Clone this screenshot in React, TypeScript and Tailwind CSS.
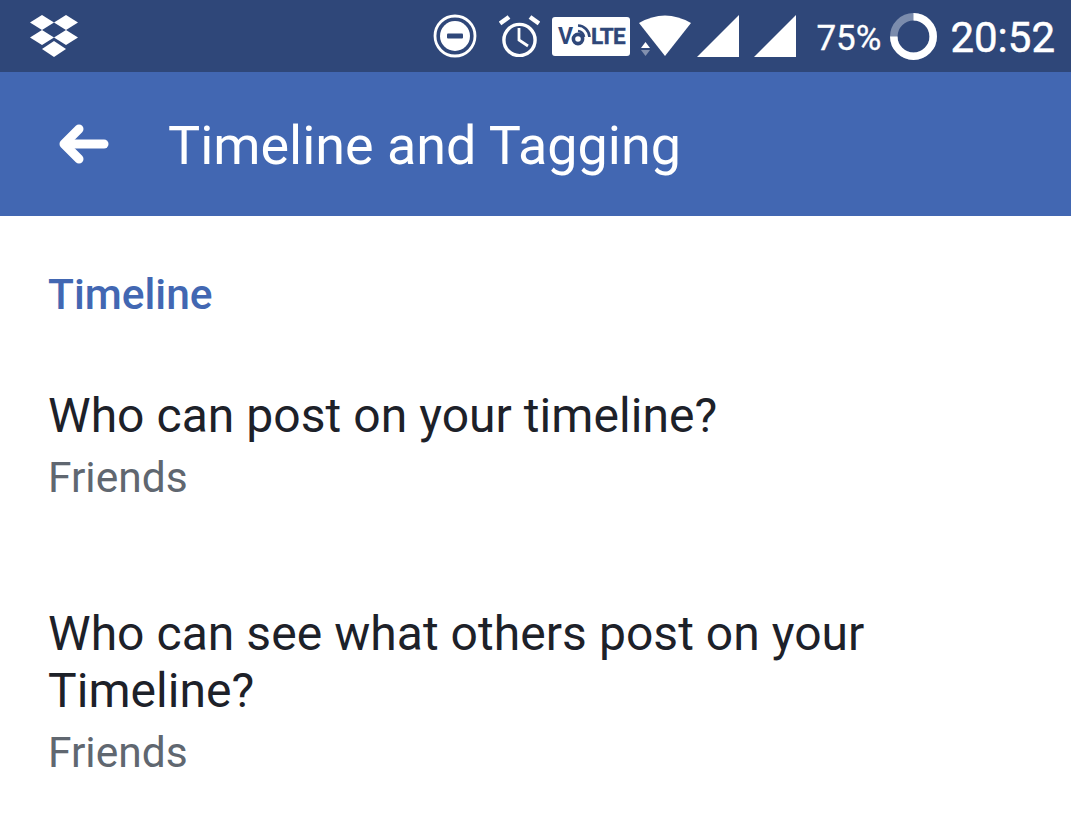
const Dropbox = () => (
  <svg width="48" height="42" viewBox="0 0 48 42" fill="white">
    <path d="M12 0 L24 7.5 L12 15 L0 7.5 Z" />
    <path d="M36 0 L48 7.5 L36 15 L24 7.5 Z" />
    <path d="M12 15 L24 22.5 L12 30 L0 22.5 Z" />
    <path d="M36 15 L48 22.5 L36 30 L24 22.5 Z" />
    <path d="M24 26 L36 34 L24 42 L12 34 Z" />
  </svg>
);

const Dnd = () => (
  <svg width="44" height="44" viewBox="0 0 44 44" fill="none">
    <circle cx="22" cy="22" r="20" stroke="white" strokeWidth="2.8" />
    <circle cx="22" cy="22" r="15" fill="white" />
    <rect x="14" y="19.5" width="16" height="5" rx="1" fill="#2f4779" />
  </svg>
);

const Alarm = () => (
  <svg width="41" height="42" viewBox="0 0 41 42" fill="none" stroke="white" strokeWidth="3.4">
    <circle cx="20.5" cy="25" r="15.6" />
    <path d="M20 13 V25 L29 31" strokeWidth="2.8" />
    <path d="M1 8.5 L10 2" strokeWidth="4.6" />
    <path d="M40 8.5 L31 2" strokeWidth="4.6" />
  </svg>
);

const VolteBadge = () => (
  <div className="w-[78px] h-[39px] bg-white rounded-[3px] flex items-center justify-center text-[#2f4779] font-bold leading-none">
    <span className="text-[23px]">V</span>
    <svg width="20" height="26" viewBox="0 0 20 26" fill="none" stroke="#2f4779" className="-ml-[2px] -mt-[2px]">
      <circle cx="7" cy="17" r="4.6" strokeWidth="3.6" />
      <path d="M7 9 A7 7 0 0 1 13 15" strokeWidth="2.6" />
      <path d="M7 3.5 A12 12 0 0 1 18.5 15" strokeWidth="2.6" />
    </svg>
    <span className="text-[22.5px] tracking-[-0.8px] [-webkit-text-stroke:0.4px_#2f4779]">LTE</span>
  </div>
);

const Wifi = () => (
  <svg width="52" height="42" viewBox="0 0 52 42">
    <path d="M0 8 Q26 -7 52 8 L26 41 Z" fill="white" />
    <path d="M6.5 27 L11 33 H2 Z" fill="white" />
    <path d="M2 35 H11 L6.5 41 Z" fill="white" opacity="0.4" />
  </svg>
);

const Signal = () => (
  <svg width="42" height="42" viewBox="0 0 42 42">
    <path d="M42 0 V42 H0 Z" fill="white" />
  </svg>
);

const BatteryRing = () => (
  <svg width="47" height="47" viewBox="0 0 47 47" fill="none" strokeWidth="7.5">
    <circle cx="23.5" cy="23.5" r="19.7" stroke="#7b8cad" />
    <path d="M23.5 3.8 A19.7 19.7 0 1 1 3.8 23.5" stroke="white" />
  </svg>
);

const SettingRow = ({ title, value }: { title: string; value: string }) => (
  <div>
    <p className="text-[48px] leading-[57px] tracking-[0.05px] text-[#1d2129] w-[900px]">{title}</p>
    <p className="mt-[10px] text-[42.5px] leading-[48px] text-[#606770]">{value}</p>
  </div>
);

export default function App() {
  return (
    <div className="w-[1071px] h-[823px] overflow-hidden bg-white font-['Roboto',sans-serif]">
      <div className="h-[72px] bg-[#2f4779] flex items-center justify-between pl-[30px] pr-[16px] text-white">
        <Dropbox />
        <div className="flex items-center">
          <Dnd />
          <div className="ml-[22px]">
            <Alarm />
          </div>
          <div className="ml-[12px]">
            <VolteBadge />
          </div>
          <div className="ml-[9px]">
            <Wifi />
          </div>
          <div className="ml-[6px]">
            <Signal />
          </div>
          <div className="ml-[15px]">
            <Signal />
          </div>
          <span className="ml-[20px] pt-[4px] text-[35px] leading-none [-webkit-text-stroke:0.3px_white]">75%</span>
          <div className="ml-[9px]">
            <BatteryRing />
          </div>
          <span className="ml-[13px] pt-[4px] text-[42px] leading-none [-webkit-text-stroke:0.5px_white]">20:52</span>
        </div>
      </div>

      <div className="h-[144px] bg-[#4267b2] flex items-center text-white">
        <svg width="50" height="40" viewBox="0 0 50 40" fill="none" stroke="white" strokeWidth="9" strokeLinecap="round" strokeLinejoin="round" className="ml-[59px]">
          <path d="M45 20 H7" />
          <path d="M20 5 L5 20 L20 35" />
        </svg>
        <h1 className="ml-[59px] pt-[3px] text-[53.9px] leading-none font-normal">Timeline and Tagging</h1>
      </div>

      <div className="pl-[48px]">
        <h2 className="pt-[55px] text-[42.5px] leading-[48px] font-medium text-[#4267b2]">Timeline</h2>
        <div className="mt-[68px]">
          <SettingRow title="Who can post on your timeline?" value="Friends" />
        </div>
        <div className="mt-[103px]">
          <SettingRow title="Who can see what others post on your Timeline?" value="Friends" />
        </div>
      </div>
    </div>
  );
}
